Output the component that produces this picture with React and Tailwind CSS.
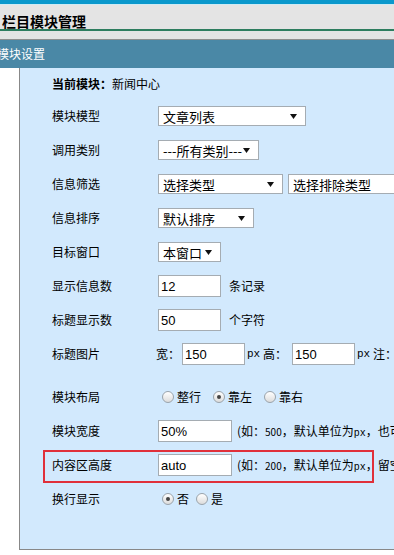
import React from "react";

const cjk = { fontFamily: '"Noto Sans CJK SC", "Liberation Sans", sans-serif' };

const Arrow = () => (
  <svg width="7" height="5" viewBox="0 0 7 5" className="shrink-0">
    <path d="M0 0 H7 L3.5 5 Z" fill="#111" />
  </svg>
);

const Select = ({ text, w }) => (
  <div
    className="h-[20px] shrink-0 bg-white border border-[#a5acb2] flex items-center justify-between pl-[4px] pr-[8px] text-[13px] text-black leading-none whitespace-nowrap"
    style={{ width: w }}
  >
    <span>{text}</span>
    <Arrow />
  </div>
);

const Input = ({ value, w }) => (
  <div
    className="h-[22px] shrink-0 bg-white border border-[#a5acb2] flex items-center pl-[2px] text-[13px] text-black leading-none font-['Liberation_Sans']"
    style={{ width: w }}
  >
    {value}
  </div>
);

const Radio = ({ checked }) => (
  <span className="w-[12px] h-[12px] shrink-0 rounded-full border border-[#9aa3ab] bg-gradient-to-b from-white to-[#dcdcdc] flex items-center justify-center">
    {checked && <span className="w-[4px] h-[4px] rounded-full bg-[#444]" />}
  </span>
);

const Row = ({ label, h = "h-[34px]", children }) => (
  <div className={`${h} flex items-center whitespace-nowrap`}>
    <div className="w-[106px] shrink-0 text-[12px] text-black">{label}</div>
    <div className="flex items-center">{children}</div>
  </div>
);

export default function App() {
  return (
    <div className="w-[394px] h-[555px] overflow-hidden bg-white" style={cjk}>
      {/* top bar */}
      <div className="h-[4px] bg-[#0a98cc]" />
      <div className="h-px bg-[#cfeaf3]" />
      <div className="bg-[#e4e4e4] h-[35px] border-b border-[#8f8f8f]">
        <div className="h-[26px] flex items-end pl-[2px] pb-[1px] border-b-2 border-[#2e7d5f]">
          <span className="text-[14px] font-bold text-black leading-none">栏目模块管理</span>
        </div>
      </div>
      {/* section header */}
      <div className="h-[28px] bg-[#4a88a6] flex items-center">
        <span className="text-[12px] text-white ml-[-3px] leading-none">模块设置</span>
      </div>
      {/* body */}
      <div className="flex h-[482px]">
        <div className="w-[19px] shrink-0 bg-white" />
        <div className="flex-1 bg-[#d2e9fd] border-l border-b border-[#888] pl-[32px] overflow-hidden">
          <div className="h-[31px] flex items-center text-[12px] text-black whitespace-nowrap">
            <span className="font-bold">当前模块：</span>
            <span>新闻中心</span>
          </div>
          <Row label="模块模型">
            <Select text="文章列表" w="148px" />
          </Row>
          <Row label="调用类别">
            <Select text="---所有类别---" w="101px" />
          </Row>
          <Row label="信息筛选">
            <Select text="选择类型" w="125px" />
            <div className="ml-[5px]">
              <Select text="选择排除类型" w="125px" />
            </div>
          </Row>
          <Row label="信息排序">
            <Select text="默认排序" w="96px" />
          </Row>
          <Row label="目标窗口">
            <Select text="本窗口" w="63px" />
          </Row>
          <Row label="显示信息数">
            <Input value="12" w="63px" />
            <span className="ml-[8px] text-[12px]">条记录</span>
          </Row>
          <Row label="标题显示数">
            <Input value="50" w="63px" />
            <span className="ml-[8px] text-[12px]">个字符</span>
          </Row>
          <Row label="标题图片">
            <span className="ml-[-2px] text-[12px] w-[26px]">宽：</span>
            <Input value="150" w="63px" />
            <span className="ml-[2px] text-[11px] font-['Liberation_Mono'] w-[16px]">px</span>
            <span className="text-[12px] w-[29px]">高：</span>
            <Input value="150" w="63px" />
            <span className="ml-[2px] text-[11px] font-['Liberation_Mono'] w-[16px]">px</span>
            <span className="text-[12px]">注：</span>
          </Row>
          <div className="h-[9px]" />
          <Row label="模块布局">
            <span className="ml-[4px]"><Radio /></span>
            <span className="ml-[3px] text-[12px]">整行</span>
            <span className="ml-[12px]"><Radio checked /></span>
            <span className="ml-[3px] text-[12px]">靠左</span>
            <span className="ml-[12px]"><Radio /></span>
            <span className="ml-[3px] text-[12px]">靠右</span>
          </Row>
          <Row label="模块宽度">
            <Input value="50%" w="74px" />
            <span className="ml-[5px] text-[12px]">
              (如：<span className="text-[10px]">500</span>，默认单位为<span className="text-[10px] font-['Liberation_Mono']">px</span>，也可以使用百分比)
            </span>
          </Row>
          <div className="relative">
            <div className="absolute left-[-9px] top-[2px] w-[331px] h-[33px] border-2 border-[#e0303a] pointer-events-none" />
            <Row label="内容区高度">
              <Input value="auto" w="74px" />
              <span className="ml-[5px] text-[12px]">
                (如：<span className="text-[10px]">200</span>，默认单位为<span className="text-[10px] font-['Liberation_Mono']">px</span>，留空为自动)
              </span>
            </Row>
          </div>
          <Row label="换行显示">
            <span className="ml-[4px]"><Radio checked /></span>
            <span className="ml-[3px] text-[12px]">否</span>
            <span className="ml-[7px]"><Radio /></span>
            <span className="ml-[3px] text-[12px]">是</span>
          </Row>
        </div>
      </div>
    </div>
  );
}
